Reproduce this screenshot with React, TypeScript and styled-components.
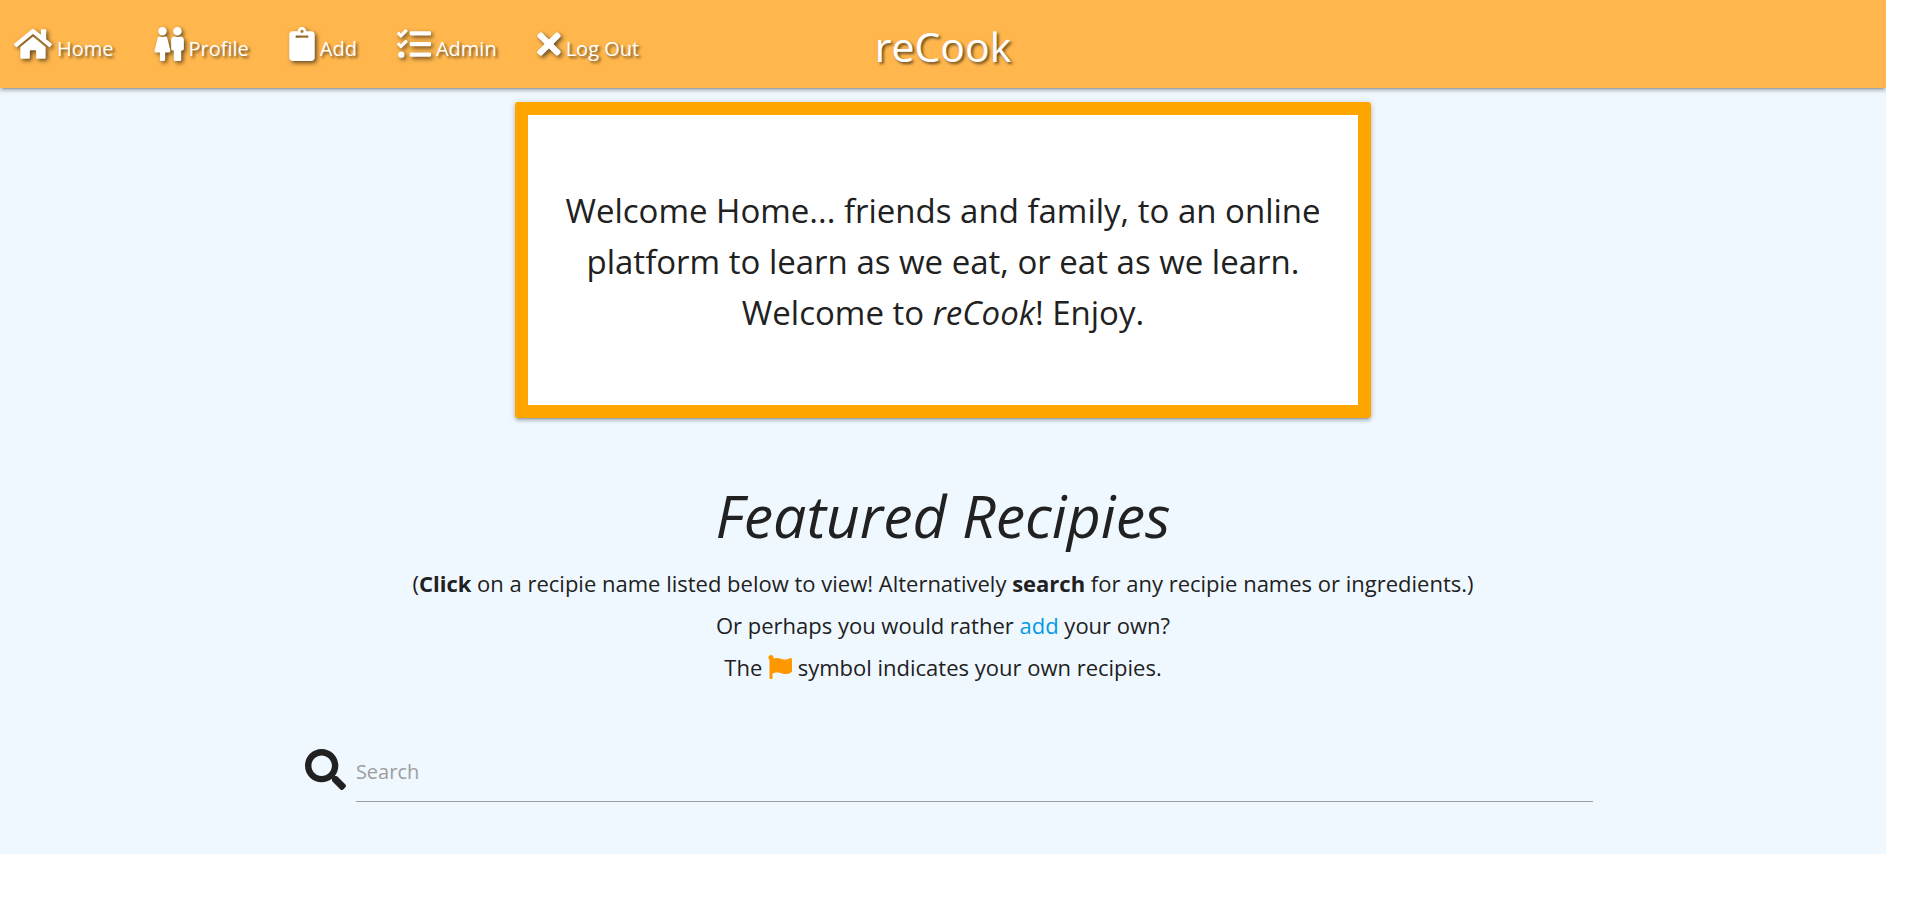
import React from "react";
import styled, { createGlobalStyle } from "styled-components";
import {
  FaClipboard,
  FaFemale,
  FaFlag,
  FaHome,
  FaMale,
  FaSearch,
  FaTasks,
  FaTimes,
} from "react-icons/fa";

const GlobalStyle = createGlobalStyle`
  *, *::before, *::after { box-sizing: border-box; }
  body {
    margin: 0;
    padding-right: 28px;
    background: #fff;
    color: #212121;
    font-family: "Segoe UI", "Open Sans", "Noto Sans", sans-serif;
  }
`;

const Page = styled.div`
  overflow: hidden;
  background: #f0f8ff;
  padding-bottom: 52px;
`;

const NavBar = styled.header`
  display: grid;
  grid-template-columns: 1fr auto 1fr;
  align-items: center;
  height: 88px;
  background: #ffb74d;
  color: #fff;
  box-shadow: 0 3px 3px rgba(0, 0, 0, 0.14), 0 4px 1px -3px rgba(0, 0, 0, 0.12),
    0 1px 6px rgba(0, 0, 0, 0.2);
`;

const NavList = styled.ul`
  display: flex;
  gap: 40px;
  margin: 0;
  padding: 0 0 0 14px;
  list-style: none;
`;

const NavLink = styled.a`
  display: flex;
  align-items: center;
  gap: 5px;
  height: 88px;
  color: inherit;
  font-size: 20px;
  line-height: 28px;
  white-space: nowrap;
  text-decoration: none;
  text-shadow: 2px 2px 3px rgba(0, 0, 0, 0.6);
`;

const NavIcon = styled.span<{ $width: number }>`
  display: flex;
  filter: drop-shadow(2px 2px 2px rgba(0, 0, 0, 0.6));

  svg {
    width: ${({ $width }) => $width}px;
    height: 34px;
  }

  svg + svg {
    width: 13px;
  }
`;

const NavLabel = styled.span`
  padding-top: 9px;
`;

const Brand = styled.a`
  color: inherit;
  font-size: 41px;
  line-height: 64px;
  padding-top: 4px;
  text-decoration: none;
  text-shadow: 2px 2px 3px rgba(0, 0, 0, 0.6);
`;

const Container = styled.main`
  width: 70%;
  margin: 0 auto;
  padding-top: 14px;
`;

const WelcomeCard = styled.section`
  width: calc(200% / 3 - 25px);
  margin: 0 auto;
  padding: 70px 36px 67px;
  background: #fff;
  border: 13px solid #ffa500;
  border-radius: 3px;
  box-shadow: 0 3px 3px rgba(0, 0, 0, 0.14), 0 4px 1px -3px rgba(0, 0, 0, 0.12),
    0 1px 6px rgba(0, 0, 0, 0.2);
`;

const WelcomeText = styled.p`
  margin: 0;
  font-size: 33px;
  line-height: 51px;
  text-align: center;
`;

const Featured = styled.section`
  padding-top: 64px;
  text-align: center;
`;

const FeaturedTitle = styled.h1`
  margin: 0 0 14px;
  font-size: 59px;
  font-style: italic;
  font-weight: 400;
  line-height: 66px;
`;

const Hint = styled.p`
  margin: 0;
  font-size: 22px;
  line-height: 42px;
`;

const InlineLink = styled.a`
  color: #039be5;
  text-decoration: none;
`;

const FlagIcon = styled(FaFlag)`
  width: 24px;
  height: 24px;
  color: #ff9800;
  vertical-align: -3px;
`;

const SearchForm = styled.form`
  display: flex;
  align-items: center;
  gap: 10px;
  margin-top: 52px;
  padding: 0 10px 0 22px;
`;

const SearchLabel = styled.label`
  display: flex;
  padding-bottom: 4px;
  font-size: 41px;
`;

const SearchInput = styled.input`
  flex: 1;
  min-width: 0;
  height: 62px;
  padding: 2px 0 0;
  border: 0;
  border-bottom: 1px solid #9e9e9e;
  outline: 0;
  background: transparent;
  color: inherit;
  font: inherit;
  font-size: 20px;

  &::placeholder {
    color: #9e9e9e;
    opacity: 1;
  }
`;

const links = [
  { label: "Home", width: 38, icon: <FaHome /> },
  { label: "Profile", width: 17, icon: <><FaFemale /><FaMale /></> },
  { label: "Add", width: 26, icon: <FaClipboard /> },
  { label: "Admin", width: 34, icon: <FaTasks /> },
  { label: "Log Out", width: 24, icon: <FaTimes /> },
];

export default function App() {
  return (
    <>
      <GlobalStyle />
      <Page>
        <NavBar>
          <nav>
            <NavList>
              {links.map(({ label, width, icon }) => (
                <li key={label}>
                  <NavLink href="#">
                    <NavIcon $width={width} aria-hidden="true">
                      {icon}
                    </NavIcon>
                    <NavLabel>{label}</NavLabel>
                  </NavLink>
                </li>
              ))}
            </NavList>
          </nav>
          <Brand href="#">reCook</Brand>
        </NavBar>
        <Container>
          <WelcomeCard>
            <WelcomeText>
              Welcome Home... friends and family, to an online platform to learn
              as we eat, or eat as we learn. Welcome to <em>reCook</em>! Enjoy.
            </WelcomeText>
          </WelcomeCard>
          <Featured>
            <FeaturedTitle>Featured Recipies</FeaturedTitle>
            <Hint>
              (<strong>Click</strong> on a recipie name listed below to view!
              Alternatively <strong>search</strong> for any recipie names or
              ingredients.)
            </Hint>
            <Hint>
              Or perhaps you would rather <InlineLink href="#">add</InlineLink>{" "}
              your own?
            </Hint>
            <Hint>
              The <FlagIcon aria-hidden="true" /> symbol indicates your own
              recipies.
            </Hint>
          </Featured>
          <SearchForm role="search" onSubmit={(e) => e.preventDefault()}>
            <SearchLabel htmlFor="search" aria-label="Search">
              <FaSearch aria-hidden="true" />
            </SearchLabel>
            <SearchInput id="search" type="text" placeholder="Search" />
          </SearchForm>
        </Container>
      </Page>
    </>
  );
}
